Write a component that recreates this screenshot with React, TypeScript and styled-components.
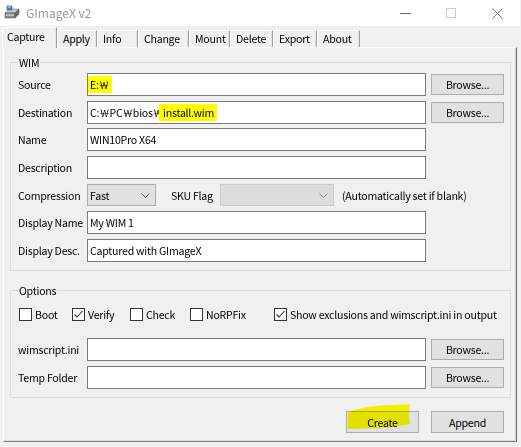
import React from "react";
import styled, { createGlobalStyle } from "styled-components";

const GlobalStyle = createGlobalStyle`
  html, body {
    margin: 0;
    padding: 0;
    background: #f0f0f0;
  }
  body {
    font-family: "Noto Sans CJK KR", "Liberation Sans", sans-serif;
    font-size: 10.6px;
    letter-spacing: -0.25px;
    color: #000;
  }
  * {
    box-sizing: border-box;
  }
`;

const Window = styled.div`
  width: 521px;
  height: 447px;
  background: #f0f0f0;
  display: flex;
  flex-direction: column;
  overflow: hidden;
`;

const TitleBar = styled.div`
  height: 26px;
  margin-right: 1px;
  background: #fff;
  display: flex;
  align-items: center;
  padding-left: 4px;
`;

const TitleText = styled.span`
  margin-left: 6px;
  font-size: 12px;
  letter-spacing: 0;
  color: #999;
  line-height: 1;
`;

const Controls = styled.div`
  margin-left: auto;
  display: flex;
  height: 100%;
`;

const CtrlButton = styled.div`
  width: 46px;
  height: 100%;
  display: flex;
  align-items: center;
  justify-content: center;
`;

const TabStrip = styled.div`
  height: 21px;
  display: flex;
  align-items: flex-end;
  padding-left: 2px;
`;

const Tab = styled.div<{ $w: number; $active?: boolean }>`
  width: ${(p) => p.$w}px;
  height: ${(p) => (p.$active ? 21 : 17)}px;
  margin-bottom: ${(p) => (p.$active ? -1 : 0)}px;
  position: relative;
  z-index: ${(p) => (p.$active ? 2 : 1)};
  background: #f0f0f0;
  border-top: 1px solid #fff;
  border-left: 1px solid #fff;
  border-right: 1px solid #a0a0a0;
  box-shadow: inset -1px 0 0 #e3e3e3;
  padding-left: ${(p) => (p.$active ? 4 : 5)}px;
  padding-top: ${(p) => (p.$active ? 1 : 0)}px;
  line-height: 15px;
  white-space: nowrap;
`;

const Panel = styled.div`
  flex: 1;
  margin: 0 4px 5px 3px;
  border-top: 1px solid #fff;
  border-left: 1px solid #fff;
  border-right: 1px solid #696969;
  border-bottom: 1px solid #808080;
  box-shadow: inset -1px -1px 0 #d8d8d8;
  padding: 7px 0 0 6px;
  display: flex;
  flex-direction: column;
`;

const Group = styled.fieldset<{ $gap?: number }>`
  width: 501px;
  margin: ${(p) => p.$gap ?? 0}px 0 0 0;
  padding: 3px 5px 8px 7px;
  border: 1px solid #dcdcdc;
  min-width: 0;
`;

const Legend = styled.legend`
  padding: 0 1px;
  margin-left: 0;
  line-height: 15px;
`;

const Rows = styled.div<{ $top?: number }>`
  display: flex;
  flex-direction: column;
  gap: 4.67px;
  margin-top: ${(p) => p.$top ?? 0}px;
`;

const Row = styled.div`
  height: 23px;
  display: flex;
  align-items: center;
`;

const Label = styled.span`
  width: 69px;
  white-space: nowrap;
`;

const Field = styled.div`
  width: 339px;
  height: 23px;
  background: #fff;
  border: 1px solid #7a7a7a;
  padding-left: 2px;
  display: flex;
  align-items: center;
  white-space: nowrap;
`;

const Mark = styled.span<{ $pad: number }>`
  background: #ffff00;
  padding: 1px 3px 1px ${(p) => p.$pad}px;
  margin-left: -${(p) => p.$pad}px;
`;

const Button = styled.div<{ $h?: number }>`
  width: 73px;
  height: ${(p) => p.$h ?? 21}px;
  background: #e1e1e1;
  border: 1px solid #adadad;
  display: flex;
  align-items: center;
  justify-content: center;
  position: relative;
`;

const Browse = styled(Button)`
  margin-left: 5px;
`;

const Select = styled.div<{ $w: number; $disabled?: boolean }>`
  width: ${(p) => p.$w}px;
  height: 22px;
  background: ${(p) => (p.$disabled ? "#dcdcdc" : "#e1e1e1")};
  border: 1px solid ${(p) => (p.$disabled ? "#cccccc" : "#adadad")};
  display: flex;
  align-items: center;
  padding: 0 5px 0 2px;
  justify-content: space-between;
`;

const SkuLabel = styled.span`
  margin-left: 15px;
  width: 49px;
  white-space: nowrap;
`;

const Note = styled.span`
  margin-left: 8px;
  white-space: nowrap;
`;

const CheckRow = styled.div`
  display: flex;
  height: 15px;
  align-items: center;
  margin-top: 6px;
`;

const CheckItem = styled.div<{ $w?: number }>`
  width: ${(p) => (p.$w ? `${p.$w}px` : "auto")};
  display: flex;
  align-items: center;
  white-space: nowrap;
`;

const Box = styled.span`
  width: 13px;
  height: 13px;
  margin-left: 1px;
  margin-right: 3px;
  border: 1px solid #333;
  background: #fff;
  display: flex;
  align-items: center;
  justify-content: center;
`;

const Actions = styled.div`
  width: 501px;
  margin-top: 13px;
  padding-right: 7px;
  display: flex;
  justify-content: flex-end;
  gap: 12px;
`;

const Scribble = styled.svg`
  position: absolute;
  left: 0;
  top: -8px;
  mix-blend-mode: multiply;
  pointer-events: none;
`;

const ButtonLabel = styled.span`
  position: relative;
`;

const Chevron = ({ color = "#555" }: { color?: string }) => (
  <svg width="9" height="5" viewBox="0 0 9 5">
    <path d="M0.5 0.5 L4.5 4.5 L8.5 0.5" fill="none" stroke={color} strokeWidth="1" />
  </svg>
);

const Check = () => (
  <svg width="11" height="11" viewBox="0 0 11 11">
    <path d="M1.5 5.5 L4 8 L9.5 2" fill="none" stroke="#333" strokeWidth="1.1" />
  </svg>
);

const AppIcon = () => (
  <svg width="16" height="16" viewBox="0 0 16 16">
    <path d="M1 8 L5 4 L15 4 L11 8 Z" fill="#c9c9c9" stroke="#777" strokeWidth="0.6" />
    <path d="M1 8 L11 8 L11 13 L1 13 Z" fill="#8a8a8a" stroke="#555" strokeWidth="0.6" />
    <path d="M11 8 L15 4 L15 9 L11 13 Z" fill="#6d6d6d" stroke="#555" strokeWidth="0.6" />
    <path d="M2 10 L10 10" stroke="#e8e8e8" strokeWidth="1" />
    <path d="M3 1 L8 1 L8 5 L3 5 Z" fill="#3a8fb0" stroke="#2a6a88" strokeWidth="0.6" />
    <path d="M4 2 L7 2" stroke="#bfe4f2" strokeWidth="1" />
  </svg>
);

const tabs = [
  { name: "Capture", w: 55 },
  { name: "Apply", w: 40 },
  { name: "Info", w: 41 },
  { name: "Change", w: 51 },
  { name: "Mount", w: 41 },
  { name: "Delete", w: 43 },
  { name: "Export", w: 44 },
  { name: "About", w: 43 },
];

const checks = [
  { label: "Boot", w: 53, on: false },
  { label: "Verify", w: 58, on: true },
  { label: "Check", w: 60, on: false },
  { label: "NoRPFix", w: 84, on: false },
  { label: "Show exclusions and wimscript.ini in output", on: true },
];

export default function App() {
  return (
    <>
      <GlobalStyle />
      <Window>
        <TitleBar>
          <AppIcon />
          <TitleText>GImageX v2</TitleText>
          <Controls>
            <CtrlButton>
              <svg width="11" height="1">
                <rect width="11" height="1" fill="#666" />
              </svg>
            </CtrlButton>
            <CtrlButton>
              <svg width="10" height="10">
                <rect x="0.5" y="0.5" width="9" height="9" fill="none" stroke="#ccc" />
              </svg>
            </CtrlButton>
            <CtrlButton>
              <svg width="11" height="11">
                <path d="M0.5 0.5 L10.5 10.5 M10.5 0.5 L0.5 10.5" stroke="#777" strokeWidth="1" />
              </svg>
            </CtrlButton>
          </Controls>
        </TitleBar>

        <TabStrip>
          {tabs.map((t, i) => (
            <Tab key={t.name} $w={t.w} $active={i === 0}>
              {t.name}
            </Tab>
          ))}
        </TabStrip>

        <Panel>
          <Group>
            <Legend>WIM</Legend>
            <Rows>
              <Row>
                <Label>Source</Label>
                <Field>
                  <Mark $pad={2}>E:￦</Mark>
                </Field>
                <Browse>Browse...</Browse>
              </Row>
              <Row>
                <Label>Destination</Label>
                <Field>
                  C:￦PC￦bios￦<Mark $pad={4}>install.wim</Mark>
                </Field>
                <Browse>Browse...</Browse>
              </Row>
              <Row>
                <Label>Name</Label>
                <Field>WIN10Pro X64</Field>
              </Row>
              <Row>
                <Label>Description</Label>
                <Field />
              </Row>
              <Row>
                <Label>Compression</Label>
                <Select $w={69}>
                  <span>Fast</span>
                  <Chevron />
                </Select>
                <SkuLabel>SKU Flag</SkuLabel>
                <Select $w={114} $disabled>
                  <span />
                  <Chevron color="#888" />
                </Select>
                <Note>(Automatically set if blank)</Note>
              </Row>
              <Row>
                <Label>Display Name</Label>
                <Field>My WIM 1</Field>
              </Row>
              <Row>
                <Label>Display Desc.</Label>
                <Field>Captured with GImageX</Field>
              </Row>
            </Rows>
          </Group>

          <Group $gap={12.5}>
            <Legend>Options</Legend>
            <CheckRow>
              {checks.map((c) => (
                <CheckItem key={c.label} $w={c.w}>
                  <Box>{c.on && <Check />}</Box>
                  {c.label}
                </CheckItem>
              ))}
            </CheckRow>
            <Rows $top={16}>
              <Row>
                <Label>wimscript.ini</Label>
                <Field />
                <Browse>Browse...</Browse>
              </Row>
              <Row>
                <Label>Temp Folder</Label>
                <Field />
                <Browse>Browse...</Browse>
              </Row>
            </Rows>
          </Group>

          <Actions>
            <Button $h={22}>
              <Scribble width="64" height="26" viewBox="0 0 64 26">
                <path
                  d="M1 9 C 8 5, 18 3, 30 2 C 42 1, 52 0.5, 63 0.5 L 62 10 L 63 20 L 40 24 L 1 25 Z"
                  fill="#ffff00"
                />
              </Scribble>
              <ButtonLabel>Create</ButtonLabel>
            </Button>
            <Button $h={22}>Append</Button>
          </Actions>
        </Panel>
      </Window>
    </>
  );
}
